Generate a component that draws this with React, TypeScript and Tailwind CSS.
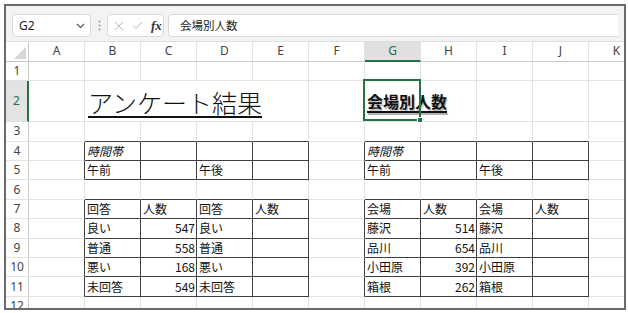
import React from 'react';

const COLS = ['A', 'B', 'C', 'D', 'E', 'F', 'G', 'H', 'I', 'J', 'K'];

type Cell = { t: string; italic?: boolean; num?: boolean };

const DATA: Record<string, Cell> = {
  B4: { t: '時間帯', italic: true },
  G4: { t: '時間帯', italic: true },
  B5: { t: '午前' },
  D5: { t: '午後' },
  G5: { t: '午前' },
  I5: { t: '午後' },
  B7: { t: '回答' },
  C7: { t: '人数' },
  D7: { t: '回答' },
  E7: { t: '人数' },
  G7: { t: '会場' },
  H7: { t: '人数' },
  I7: { t: '会場' },
  J7: { t: '人数' },
  B8: { t: '良い' },
  C8: { t: '547', num: true },
  D8: { t: '良い' },
  B9: { t: '普通' },
  C9: { t: '558', num: true },
  D9: { t: '普通' },
  B10: { t: '悪い' },
  C10: { t: '168', num: true },
  D10: { t: '悪い' },
  B11: { t: '未回答' },
  C11: { t: '549', num: true },
  D11: { t: '未回答' },
  G8: { t: '藤沢' },
  H8: { t: '514', num: true },
  I8: { t: '藤沢' },
  G9: { t: '品川' },
  H9: { t: '654', num: true },
  I9: { t: '品川' },
  G10: { t: '小田原' },
  H10: { t: '392', num: true },
  I10: { t: '小田原' },
  G11: { t: '箱根' },
  H11: { t: '262', num: true },
  I11: { t: '箱根' },
};

function inT(r: number, c: number) {
  const rowOk = (r >= 4 && r <= 5) || (r >= 7 && r <= 11);
  const colOk = (c >= 1 && c <= 4) || (c >= 6 && c <= 9);
  return rowOk && colOk;
}

function borderCls(r: number, c: number) {
  const right = inT(r, c) || inT(r, c + 1);
  const bottom = inT(r, c) || inT(r + 1, c);
  return `${right ? 'border-r-[#3f3f3f]' : 'border-r-[#e2e2e2]'} ${bottom ? 'border-b-[#3f3f3f]' : 'border-b-[#e2e2e2]'}`;
}

const JP = "font-['Noto_Sans_CJK_JP','Noto_Sans',sans-serif]";

function RowHeader({ r }: { r: number }) {
  const sel = r === 2;
  return (
    <div
      className={`flex items-center justify-center border-b border-b-[#e2e2e2] text-[12px] font-['Noto_Sans',sans-serif] ${
        sel
          ? 'bg-[#e3e3e3] border-r-2 border-r-[#217346] text-[#217346]'
          : 'bg-white border-r border-r-[#c8c8c8] text-[#444]'
      }`}
    >
      {r}
    </div>
  );
}

function DataCell({ r, c }: { r: number; c: number }) {
  const key = `${COLS[c]}${r}`;
  const d = DATA[key];
  return (
    <div
      className={`flex items-center border-r border-b ${borderCls(r, c)} px-[2px] text-[12px] leading-none text-[#111] whitespace-nowrap ${JP} ${
        d?.num ? 'justify-end pr-[1px]' : 'justify-start'
      } ${d?.italic ? 'italic' : ''}`}
    >
      {d?.t}
    </div>
  );
}

function Row2() {
  const cells: React.ReactNode[] = [];
  cells.push(<RowHeader key="h2" r={2} />);
  cells.push(<DataCell key="A2" r={2} c={0} />);
  cells.push(
    <div
      key="B2"
      className={`col-span-4 flex items-center border-r border-b border-r-[#e2e2e2] border-b-[#e2e2e2] pl-[3px] pt-[1px] text-[25px] font-light leading-[30px] text-[#111] underline decoration-[1.6px] underline-offset-[3px] whitespace-nowrap ${JP}`}
    >
      アンケート結果
    </div>
  );
  cells.push(<DataCell key="F2" r={2} c={5} />);
  cells.push(
    <div
      key="G2"
      className={`relative col-span-2 flex items-center border-r border-b border-r-[#e2e2e2] border-b-[#e2e2e2] pl-[2px] text-[16px] font-bold leading-[20px] text-[#111] underline decoration-[1.5px] underline-offset-[3px] whitespace-nowrap [text-shadow:1px_2px_1px_rgba(0,0,0,0.3)] ${JP}`}
    >
      会場別人数
      <div className="absolute left-[-2px] top-[-2px] w-[58px] h-[calc(100%+2px)] border-2 border-[#217346] pointer-events-none">
        <div className="absolute right-[-4px] bottom-[-4px] w-[6px] h-[6px] bg-[#217346] border border-white" />
      </div>
    </div>
  );
  cells.push(<DataCell key="I2" r={2} c={8} />);
  cells.push(<DataCell key="J2" r={2} c={9} />);
  cells.push(<DataCell key="K2" r={2} c={10} />);
  return <>{cells}</>;
}

export default function App() {
  const rows: React.ReactNode[] = [];
  for (let r = 1; r <= 12; r++) {
    if (r === 2) {
      rows.push(<Row2 key="r2" />);
      continue;
    }
    rows.push(<RowHeader key={`h${r}`} r={r} />);
    for (let c = 0; c < COLS.length; c++) {
      rows.push(<DataCell key={`${r}-${c}`} r={r} c={c} />);
    }
  }

  return (
    <div className="w-[628px] h-[313px] bg-white">
      <div className="ml-[4px] mt-[4px] w-[622px] h-[306px] border-2 border-[#6a6a6a] overflow-hidden bg-white">
        {/* formula bar */}
        <div className="h-[36px] bg-[#f3f3f3] flex items-start pt-[8px] px-[6px] border-b border-[#dedede]">
          <div className="w-[79px] h-[23px] shrink-0 bg-white border border-[#dadada] rounded-[4px] flex items-center justify-between pl-[6px] pr-[5px]">
            <span className="text-[12px] text-[#222] font-['Noto_Sans',sans-serif]">G2</span>
            <svg width="9" height="6" viewBox="0 0 9 6" className="mt-[1px]">
              <path d="M1 1 L4.5 4.5 L8 1" fill="none" stroke="#555" strokeWidth="1.2" />
            </svg>
          </div>
          <div className="w-[16px] h-[23px] shrink-0 flex items-center justify-center">
            <svg width="3" height="11" viewBox="0 0 3 11">
              <circle cx="1.5" cy="1.5" r="1" fill="#9a9a9a" />
              <circle cx="1.5" cy="5.5" r="1" fill="#9a9a9a" />
              <circle cx="1.5" cy="9.5" r="1" fill="#9a9a9a" />
            </svg>
          </div>
          <div className="w-[57px] h-[23px] shrink-0 bg-white border border-[#dadada] rounded-[4px] flex items-center pl-[6px] gap-[8px]">
            <svg width="10" height="10" viewBox="0 0 10 10">
              <path d="M1 1 L9 9 M9 1 L1 9" stroke="#b8b8b8" strokeWidth="1" fill="none" />
            </svg>
            <svg width="11" height="9" viewBox="0 0 11 9">
              <path d="M1 4.5 L4 7.5 L10 1" stroke="#b8b8b8" strokeWidth="1" fill="none" />
            </svg>
            <span className="text-[13px] italic font-bold text-[#333] font-['Liberation_Serif',serif] leading-none">
              fx
            </span>
          </div>
          <div className={`ml-[4px] flex-1 h-[23px] bg-white border border-[#dadada] rounded-l-[4px] border-r-0 flex items-center pl-[11px] text-[11.5px] text-[#222] ${JP}`}>
            会場別人数
          </div>
        </div>

        {/* sheet */}
        <div className="grid grid-cols-[23px_repeat(11,56px)] grid-rows-[19.5px_19.4px_41.3px_repeat(10,19.4px)]">
          <div className="relative bg-white border-r border-r-[#c8c8c8] border-b border-b-[#c8c8c8]">
            <svg width="12" height="12" viewBox="0 0 12 12" className="absolute right-[2px] bottom-[2px]">
              <path d="M12 0 L12 12 L0 12 Z" fill="#d6d6d6" />
            </svg>
          </div>
          {COLS.map((l) => (
            <div
              key={l}
              className={`flex items-center justify-center text-[12px] font-['Noto_Sans',sans-serif] border-r border-r-[#e2e2e2] ${
                l === 'G'
                  ? 'bg-[#e0e0e0] text-[#217346] border-b-2 border-b-[#217346]'
                  : 'bg-white text-[#444] border-b border-b-[#c8c8c8]'
              }`}
            >
              {l}
            </div>
          ))}
          {rows}
        </div>
      </div>
    </div>
  );
}
